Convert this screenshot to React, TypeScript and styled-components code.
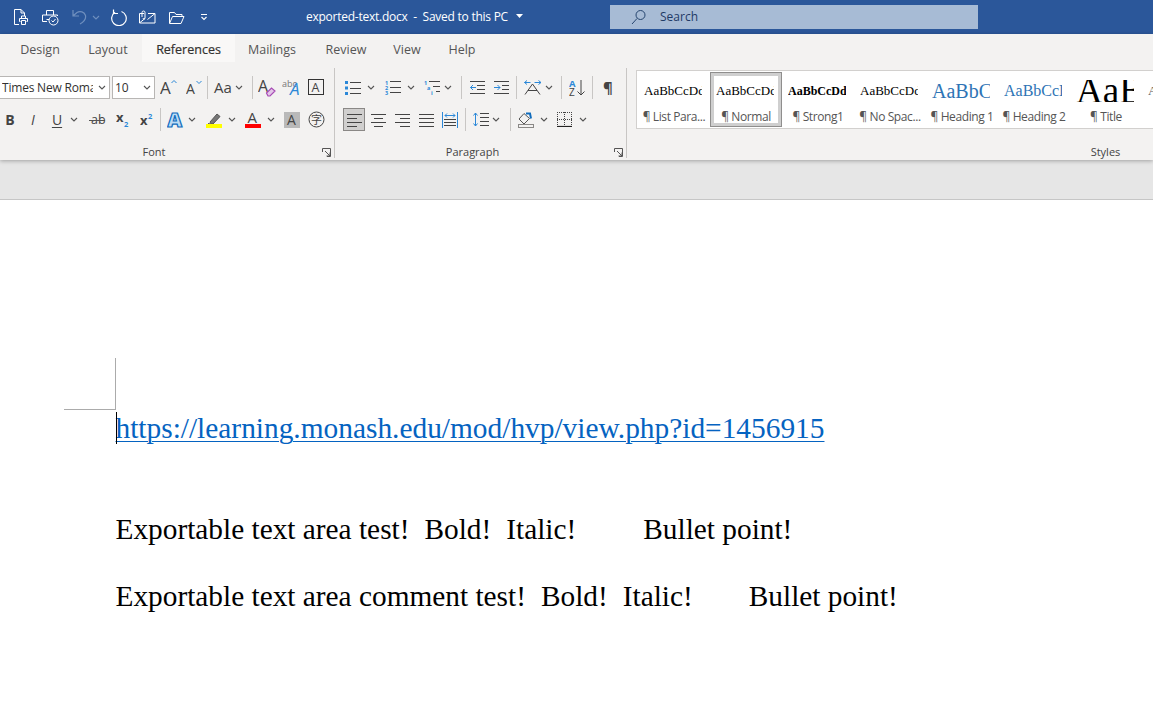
import React from "react";
import styled, { createGlobalStyle } from "styled-components";

const Global = createGlobalStyle`
  html, body { margin: 0; padding: 0; height: 100%; background: #fff; overflow: hidden; }
  #root { height: 100%; }
`;
const UI = `"Open Sans", "Noto Sans", "Liberation Sans", sans-serif`;
const SERIF = `"Liberation Serif", "Times New Roman", serif`;
const DARK = "#444";
const BLUE = "#2b88d8";

const App0 = styled.div`
  width: 1153px; height: 716px; overflow: hidden; display: flex; flex-direction: column; font-family: ${UI};
`;
const TitleBar = styled.header`
  height: 34px; flex: none; background: #2b579a; display: flex; align-items: center; padding-left: 8px; color: #fff;
`;
const Slot = styled.div<{ $w: number; $ml?: number; $gap?: number }>`
  width: ${(p) => p.$w}px; margin-left: ${(p) => p.$ml ?? 0}px; height: 23px; flex: none;
  display: flex; align-items: center; justify-content: center; gap: ${(p) => p.$gap ?? 5}px;
`;
const DocTitle = styled.div`
  width: 391px; flex: none; box-sizing: border-box; padding: 0 0 2px 87px; display: flex; align-items: center; gap: 5px;
  font-size: 12px; white-space: pre; letter-spacing: -0.25px;
`;
const SearchBox = styled.div`
  width: 368px; height: 24px; background: #a7bbd5; display: flex; align-items: center; gap: 14px;
  box-sizing: border-box; padding: 0 0 1px 21px; font-size: 12px; color: #1f3a66;
`;
const Ribbon = styled.section`
  flex: none; height: 126px; background: #f3f2f1; box-shadow: 0 1px 4px rgba(0,0,0,.3); position: relative; z-index: 1;
`;
const Tabs = styled.nav`
  height: 28px; display: flex; padding-left: 6px;
`;
const Tab = styled.div<{ $w: number; $active?: boolean }>`
  width: ${(p) => p.$w}px; display: flex; align-items: center; justify-content: center; padding-top: 2px; box-sizing: border-box;
  font-size: 12.5px; color: ${(p) => (p.$active ? "#323130" : "#555")};
  background: ${(p) => (p.$active ? "#f9f8f7" : "transparent")};
  -webkit-text-stroke: ${(p) => (p.$active ? "0.2px #323130" : "0")};
`;
const Groups = styled.div`
  height: 90px; margin-top: 6px; display: flex;
`;
const Group = styled.div<{ $w: number; $line?: boolean }>`
  width: ${(p) => p.$w}px; flex: none; box-sizing: border-box; display: flex; flex-direction: column;
  border-right: ${(p) => (p.$line ? "1px solid #c8c6c4" : "none")};
`;
const Rows = styled.div<{ $pl?: number }>`
  padding: 8px 0 0 ${(p) => p.$pl ?? 0}px; display: flex; flex-direction: column; gap: 9px;
`;
const Row = styled.div`
  display: flex; height: 23px; align-items: center;
`;
const Sep = styled.div<{ $ml: number; $mr: number }>`
  width: 1px; height: 23px; flex: none; background: #c8c6c4; margin: 0 ${(p) => p.$mr}px 0 ${(p) => p.$ml}px;
`;
const Footer = styled.div<{ $ml: number }>`
  margin-top: auto; margin-bottom: -1px; height: 14px; display: flex; align-items: center; padding-right: 3px;
  & > svg { margin-left: ${(p) => p.$ml}px; flex: none; }
`;
const GroupLabel = styled.div`
  flex: 1; text-align: center; font-size: 11px; color: #444; line-height: 14px; white-space: nowrap;
`;
const Select = styled.div<{ $w: number }>`
  width: ${(p) => p.$w}px; height: 23px; box-sizing: border-box; background: #fff; border: 1px solid #b8b6b4; flex: none;
  display: flex; align-items: center; justify-content: space-between; padding: 0 3px 0 2px;
  font-size: 12px; color: #323130; overflow: hidden; white-space: nowrap;
`;
const SelectText = styled.span`
  overflow: hidden; flex: 1; margin-right: 5px;
`;
const FontSelect = styled(Select)`
  border-left: none; margin-right: 2px; letter-spacing: -0.2px;
`;
const Letter = styled.span<{ $size?: number; $weight?: number; $italic?: boolean; $underline?: boolean }>`
  font-size: ${(p) => p.$size ?? 14}px; font-weight: ${(p) => p.$weight ?? 400};
  font-style: ${(p) => (p.$italic ? "italic" : "normal")}; color: ${DARK}; line-height: 1;
  text-decoration: ${(p) => (p.$underline ? "underline" : "none")}; text-underline-offset: 2px;
`;
const ActiveSlot = styled(Slot)`
  box-sizing: border-box; width: 22px; margin-right: 1px; background: #d0cfce; border: 1px solid #8a8886;
`;
const Gallery = styled.div`
  margin: 2px 0 0 9px; height: 59px; box-sizing: border-box; background: #fff; border: 1px solid #d2d0ce;
  display: flex; padding: 1px;
`;
const StyleItem = styled.div<{ $selected?: boolean }>`
  width: 72px; height: 55px; flex: none; display: flex; flex-direction: column; align-items: center;
  box-shadow: ${(p) => (p.$selected ? "inset 0 0 0 1px #8f8e8d, inset 0 0 0 4px #cfcfcf" : "none")};
`;
const Sample = styled.div<{ $size: number; $color?: string; $bold?: boolean }>`
  width: 58px; height: 22px; margin: 8px 2px 0 0; overflow: hidden; white-space: nowrap;
  font-family: ${SERIF}; font-size: ${(p) => p.$size}px; line-height: 22px; color: ${(p) => p.$color ?? "#000"};
  font-weight: ${(p) => (p.$bold ? 700 : 400)};
`;
const Caption = styled.div`
  margin-top: 7px; font-size: 12px; line-height: 16px; color: #555; white-space: nowrap; letter-spacing: -0.4px;
`;
const Band = styled.div`
  height: 40px; flex: none; box-sizing: border-box; background: #e6e6e6; border-bottom: 1px solid #c6c6c6;
`;
const Page = styled.main`
  flex: 1; background: #fff; padding-top: 158px; display: flex; flex-direction: column; font-family: ${SERIF}; color: #000;
`;
const CropMark = styled.div`
  width: 51px; height: 51px; margin-left: 64px; border-right: 1px solid #ababab; border-bottom: 1px solid #ababab; flex: none;
`;
const Line = styled.div<{ $mt: number }>`
  margin: ${(p) => p.$mt}px 0 0 115.5px; font-size: 29.33px; line-height: 34px; white-space: pre; position: relative;
`;
const Link = styled.span`
  color: #0563c1; font-size: 29.38px; text-decoration: underline; text-decoration-thickness: 1px; text-underline-offset: 3px;
`;
const Caret = styled.i`
  position: absolute; left: 0.5px; top: 1px; width: 1px; height: 32px; background: #000;
`;
const Gap = styled.span<{ $w: number }>`
  display: inline-block; width: ${(p) => p.$w}px;
`;

const Svg: React.FC<{ w?: number; h?: number; children: React.ReactNode }> = ({ w = 16, h = 16, children }) => (
  <svg width={w} height={h} viewBox={`0 0 ${w} ${h}`} fill="none" stroke={DARK} strokeWidth={1}>{children}</svg>
);
const Chev = ({ c = "#555" }: { c?: string }) => (
  <svg width={8} height={5} viewBox="0 0 8 5" fill="none" stroke={c} strokeWidth={1.1}><path d="M1 1l3 3 3-3" /></svg>
);
const Launcher = () => (
  <svg width={9} height={9} viewBox="0 0 9 9" fill="none" stroke="#555"><path d="M.5 4V.5H8.500V8.500H5M3 3l5 5M8 4.500V8H4.500" /></svg>
);
const Txt: React.FC<{ x: number; y: number; s: number; c?: string; w?: number; i?: boolean; f?: string; children: React.ReactNode }> = ({ x, y, s, c = DARK, w = 400, i, f = UI, children }) => (
  <text x={x} y={y} fontSize={s} fill={c} stroke="none" fontWeight={w} fontStyle={i ? "italic" : "normal"} fontFamily={f}>{children}</text>
);

const W = "#fff";
const NewDocIcon = () => (
  <svg width={16} height={17} viewBox="0 0 16 17" fill="none" stroke={W}>
    <path d="M6 15.500H1.500V.5H8l3.500 3.500v3M8 .5V4h3.500" />
    <path d="M7.500 12.500h-1v-3h8v3h-1M8.500 9.500V7h4v2.500M8.500 11.500h4v4h-4z" />
  </svg>
);
const PreviewIcon = () => (
  <svg width={17} height={17} viewBox="0 0 17 17" fill="none" stroke={W}>
    <path d="M4.500 6V1.500h7V6M5 12.500H.5v-6.500h15v1M4.500 10.500H7" />
    <circle cx="11.500" cy="11.500" r="4.500" />
    <path d="M9.500 11.500l1.500 1.500 2.500-3" />
  </svg>
);
const UndoIcon = () => (
  <svg width={15} height={16} viewBox="0 0 15 16" fill="none" stroke="#6f8fbe" strokeWidth={1.2}>
    <path d="M1 1v6h6M1.500 6.500 L5 3.500c3-2 7.500-.5 8.500 3 .6 3-1 6-5.500 8.500" />
  </svg>
);
const RedoIcon = () => (
  <svg width={17} height={17} viewBox="0 0 17 17" fill="none" stroke={W} strokeWidth={1.2}>
    <path d="M5 3.200A7.300 7.300 0 1 0 11.500 2.500" />
    <path d="M4.500 .5v4h4.500" transform="translate(-1 0)" />
  </svg>
);
const MailIcon = () => (
  <svg width={17} height={14} viewBox="0 0 17 14" fill="none" stroke={W}>
    <path d="M5 3.500H.5v9.500h15.500V3.500H9M16 3.500L8.500 9.500 M1 12.500l5-4" />
    <path d="M3 7V2.500a1.500 1.500 0 0 1 3 0V8a1 1 0 0 1-2 0" />
  </svg>
);
const FolderIcon = () => (
  <svg width={17} height={13} viewBox="0 0 17 13" fill="none" stroke={W}>
    <path d="M1.500 12V1.500h5l1.500 2h6v2M1.500 12.500h11.500l3-7H4.500l-3 7" />
  </svg>
);
const CustomizeIcon = () => (
  <svg width={8} height={8} viewBox="0 0 8 8" fill="none" stroke={W} strokeWidth={1.1}>
    <path d="M1 1.500h6M1.500 4l2.500 2.500L6.500 4" />
  </svg>
);
const SearchIcon = () => (
  <svg width={15} height={16} viewBox="0 0 15 16" fill="none" stroke="#26456f" strokeWidth={1}>
    <circle cx="9.500" cy="6" r="4.500" /><path d="M6 9.500L1 15" />
  </svg>
);
const TitleCaret = () => (
  <svg width={7} height={4} viewBox="0 0 7 4" fill={W}><path d="M0 0h7L3.500 4z" /></svg>
);

const GrowIcon = () => (
  <Svg w={18} h={17}><Txt x={0} y={15} s={17}>A</Txt><path d="M11.500 4l2.500-2.500L16.500 4" stroke={BLUE} /></Svg>
);
const ShrinkIcon = () => (
  <Svg w={16} h={17}><Txt x={0} y={15} s={14}>A</Txt><path d="M10.500 2l2.500 2.500L15.500 2" stroke={BLUE} /></Svg>
);
const ClearIcon = () => (
  <Svg w={18} h={18}><Txt x={0} y={13} s={16}>A</Txt>
    <path d="M8.500 14l5-5 3.500 3-5 5h-2z" stroke="#a74bb5" fill="#e3c6e8" strokeWidth={1.2} /></Svg>
);
const AbcIcon = () => (
  <Svg w={18} h={17}><Txt x={0} y={8} s={9} c="#777">abc</Txt><Txt x={8} y={16} s={17} c={BLUE} i>A</Txt></Svg>
);
const BorderAIcon = () => (
  <Svg w={17} h={17}><rect x=".5" y=".5" width="15" height="15" stroke="#333" /><Txt x={3.500} y={12.500} s={12.500}>A</Txt></Svg>
);
const StrikeIcon = () => (
  <Svg w={17} h={14}><Txt x={2} y={11} s={12.500}>ab</Txt><path d="M0 7.500h16" stroke="#555" /></Svg>
);
const SubIcon = () => (
  <Svg w={13} h={15}><Txt x={0} y={10} s={13} w={700}>x</Txt><Txt x={8} y={15} s={7.500} c={BLUE} w={700}>2</Txt></Svg>
);
const SupIcon = () => (
  <Svg w={13} h={15}><Txt x={0} y={13} s={13} w={700}>x</Txt><Txt x={8} y={7} s={7.500} c={BLUE} w={700}>2</Txt></Svg>
);
const TextFxIcon = () => (
  <svg width={17} height={16} viewBox="0 0 17 16">
    <text x={.5} y={15} fontSize={20} fontFamily={UI} fontWeight={800} fill="#bcdcf5" stroke="#0f6cbd" strokeWidth={1.2}>A</text>
  </svg>
);
const HighlightIcon = () => (
  <svg width={16} height={16} viewBox="0 0 16 16" fill="none" stroke="#555">
    <path d="M4 10l7-8 3 2.500-7 7.500H5z" fill="#777" stroke="#555" />
    <path d="M2 11.500L4.500 12" />
    <rect x="0" y="12" width="16" height="4" fill="#ffff00" stroke="none" />
  </svg>
);
const FontColorIcon = () => (
  <svg width={16} height={17} viewBox="0 0 16 17">
    <text x={2.500} y={12} fontSize={15} fontFamily={UI} fill={DARK}>A</text>
    <rect x="0" y="13" width="16" height="4" fill="#ff0000" />
  </svg>
);
const ShadedIcon = () => (
  <svg width={16} height={16} viewBox="0 0 16 16">
    <rect width="16" height="16" fill="#b9b9b9" />
    <text x={3} y={13} fontSize={14} fontFamily={UI} fill={DARK}>A</text>
  </svg>
);
const EnclosedIcon = () => (
  <Svg w={17} h={17}>
    <circle cx="8.500" cy="8.500" r="7.500" />
    <text x={8.500} y={12.500} fontSize={11} textAnchor="middle" fontFamily={`"Noto Sans CJK SC", sans-serif`} fill={DARK} stroke="none">字</text>
  </Svg>
);
const Lines = ({ x, ys, len }: { x: number; ys: number[]; len: number }) => (
  <path d={ys.map((y) => `M${x} ${y}.5h${len}`).join("")} stroke="#444" />
);
const BulletsIcon = () => (
  <Svg w={16} h={14}>
    <rect x="0" y="0" width="3" height="3" fill={BLUE} stroke="none" /><rect x="0" y="5.500" width="3" height="3" fill={BLUE} stroke="none" /><rect x="0" y="11" width="3" height="3" fill={BLUE} stroke="none" />
    <Lines x={5} ys={[1, 7, 12]} len={11} />
  </Svg>
);
const NumberingIcon = () => (
  <Svg w={16} h={15}>
    <Txt x={0} y={5} s={5.500} c={BLUE} w={700}>1</Txt><Txt x={0} y={10} s={5.500} c={BLUE} w={700}>2</Txt><Txt x={0} y={15} s={5.500} c={BLUE} w={700}>3</Txt>
    <Lines x={5} ys={[1, 7, 12]} len={11} />
  </Svg>
);
const MultiIcon = () => (
  <Svg w={16} h={15}>
    <Txt x={0} y={5} s={5.500} c={BLUE} w={700}>1</Txt><Txt x={3} y={10} s={5.500} c={BLUE} w={700}>a</Txt><Txt x={7} y={15} s={5.500} c={BLUE} w={700}>i</Txt>
    <path d="M5 1.500h11M9 6.500h7M12 11.500h4" stroke="#444" />
  </Svg>
);
const OutdentIcon = () => (
  <Svg w={15} h={13}><Lines x={0} ys={[0, 12]} len={15} /><path d="M7 4.500h8M7 8.500h8" stroke="#444" /><path d="M6 6.500H0.500M3 4l-2.500 2.500L3 9" stroke={BLUE} /></Svg>
);
const IndentIcon = () => (
  <Svg w={15} h={13}><Lines x={0} ys={[0, 12]} len={15} /><path d="M8 4.500h7M8 8.500h7" stroke="#444" /><path d="M0 6.500h6M3.500 4L6 6.500 3.500 9" stroke={BLUE} /></Svg>
);
const AsianIcon = () => (
  <Svg w={18} h={15}>
    <path d="M1 14.500L8.500 4l7.500 10.500M4 10.500h9" stroke="#444" />
    <path d="M.5 2.500h6M3 .5L.5 2.500 3 4.500M10.500 2.500h6.500M14.500.5l2.500 2-2.500 2" stroke={BLUE} />
  </Svg>
);
const SortIcon = () => (
  <Svg w={16} h={17}>
    <Txt x={0} y={8} s={9.500} c={BLUE} w={700}>A</Txt><Txt x={0} y={17} s={10}>Z</Txt>
    <path d="M12 1v15M8.500 12.500l3.500 3.500 3.500-3.500" stroke="#444" />
  </Svg>
);
const PilcrowIcon = () => (
  <Letter $size={15} $weight={700}>¶</Letter>
);
const Align = ({ d }: { d: string }) => (
  <Svg w={15} h={14}><path d={d} stroke="#444" /></Svg>
);
const DistIcon = () => (
  <Svg w={16} h={16}>
    <path d="M.5 0v16M15.500 0v16" stroke={BLUE} />
    <path d="M3 3.500h10M5 1.500L3 3.500l2 2M11 1.500l2 2-2 2" stroke={BLUE} />
    <path d="M2 7.500h12M2 10.500h12M2 13.500h12" stroke="#444" />
  </Svg>
);
const SpacingIcon = () => (
  <Svg w={16} h={15}>
    <path d="M2.500 1v13M.5 3.500l2-2.500 2 2.500M.5 11.500l2 2.500 2-2.500" stroke={BLUE} />
    <Lines x={7} ys={[1, 5, 9, 13]} len={9} />
  </Svg>
);
const BucketIcon = () => (
  <Svg w={16} h={16}>
    <path d="M6 1.500L1 7l5 5 5.500-5.500z" stroke="#555" />
    <path d="M8 1.500l4 0 1 5" stroke="#0f6cbd" strokeWidth={2} />
    <rect x=".5" y="12.500" width="15" height="3" fill="#f3f2f1" stroke="#8a8886" />
  </Svg>
);
const BordersIcon = () => (
  <Svg w={15} h={15}>
    <path d="M.5 0v14M14.500 0v14M0 .5h15M7.500 0v14M0 7.500h15" stroke="#444" strokeDasharray="1 1" />
    <path d="M0 14.500h15" stroke="#222" strokeWidth={1.200} />
  </Svg>
);

const STYLES = [
  { s: "¶ List Para...", z: 13, t: "AaBbCcDdEe" },
  { s: "¶ Normal", z: 13, t: "AaBbCcDdEe", sel: true },
  { s: "¶ Strong1", z: 12, t: "AaBbCcDd", b: true },
  { s: "¶ No Spac...", z: 13, t: "AaBbCcDdEe" },
  { s: "¶ Heading 1", z: 20, t: "AaBbCcDd", c: "#2e74b5" },
  { s: "¶ Heading 2", z: 16, t: "AaBbCcDd", c: "#2e74b5" },
  { s: "¶ Title", z: 37, t: "AaBbCc" },
  { s: "¶ Subtitle", z: 13, t: "AaBbCcDdEe", c: "#5a5a5a" },
];
const TABS: [string, number][] = [["Design", 68], ["Layout", 68], ["References", 93], ["Mailings", 74], ["Review", 74], ["View", 48], ["Help", 62]];

export default function App() {
  return (
    <App0>
      <Global />
      <TitleBar>
        <Slot $w={26}><NewDocIcon /></Slot>
        <Slot $w={26} $ml={3}><PreviewIcon /></Slot>
        <Slot $w={39} $ml={3}><UndoIcon /><Chev c="#6f8fbe" /></Slot>
        <Slot $w={26}><RedoIcon /></Slot>
        <Slot $w={32}><MailIcon /></Slot>
        <Slot $w={26}><FolderIcon /></Slot>
        <Slot $w={30}><CustomizeIcon /></Slot>
        <DocTitle>exported-text.docx  -  Saved to this PC <TitleCaret /></DocTitle>
        <SearchBox><SearchIcon />Search</SearchBox>
      </TitleBar>
      <Ribbon>
        <Tabs>
          {TABS.map(([t, w]) => <Tab key={t} $w={w} $active={t === "References"}>{t}</Tab>)}
        </Tabs>
        <Groups>
          <Group $w={335} $line>
            <Rows>
              <Row>
                <FontSelect $w={110}><SelectText>Times New Roman</SelectText><Chev /></FontSelect>
                <Select $w={43}><SelectText>10</SelectText><Chev /></Select>
                <Slot $w={24} $ml={2}><GrowIcon /></Slot>
                <Slot $w={24} $ml={1}><ShrinkIcon /></Slot>
                <Sep $ml={1} $mr={1} />
                <Slot $w={39} $gap={3}><Letter $size={15}>Aa</Letter><Chev /></Slot>
                <Sep $ml={4} $mr={2} />
                <Slot $w={24}><ClearIcon /></Slot>
                <Slot $w={24}><AbcIcon /></Slot>
                <Slot $w={24} $ml={1}><BorderAIcon /></Slot>
              </Row>
              <Row>
                <Slot $w={20}><Letter $weight={700} $size={14}>B</Letter></Slot>
                <Slot $w={26}><Letter $italic $size={14}>I</Letter></Slot>
                <Slot $w={38} $gap={8}><Letter $underline $size={14}>U</Letter><Chev /></Slot>
                <Slot $w={26}><StrikeIcon /></Slot>
                <Slot $w={24}><SubIcon /></Slot>
                <Slot $w={24}><SupIcon /></Slot>
                <Sep $ml={2} $mr={3} />
                <Slot $w={34} $gap={4}><TextFxIcon /><Chev /></Slot>
                <Slot $w={45} $gap={6}><HighlightIcon /><Chev /></Slot>
                <Slot $w={33} $gap={6}><FontColorIcon /><Chev /></Slot>
                <Slot $w={24} $ml={4}><ShadedIcon /></Slot>
                <Slot $w={24}><EnclosedIcon /></Slot>
              </Row>
            </Rows>
            <Footer $ml={14}><GroupLabel>Font</GroupLabel><Launcher /></Footer>
          </Group>
          <Group $w={292} $line>
            <Rows $pl={8}>
              <Row>
                <Slot $w={34} $gap={6}><BulletsIcon /><Chev /></Slot>
                <Slot $w={35} $ml={5} $gap={6}><NumberingIcon /><Chev /></Slot>
                <Slot $w={41} $gap={4}><MultiIcon /><Chev /></Slot>
                <Sep $ml={3} $mr={3} />
                <Slot $w={24}><OutdentIcon /></Slot>
                <Slot $w={24}><IndentIcon /></Slot>
                <Sep $ml={3} $mr={3} />
                <Slot $w={36} $gap={3}><AsianIcon /><Chev /></Slot>
                <Sep $ml={5} $mr={3} />
                <Slot $w={24}><SortIcon /></Slot>
                <Sep $ml={3} $mr={3} />
                <Slot $w={24}><PilcrowIcon /></Slot>
              </Row>
              <Row>
                <ActiveSlot $w={22}><Align d="M0 1.500h15M0 5.500h10M0 9.500h15M0 13.500h10" /></ActiveSlot>
                <Slot $w={24}><Align d="M0 1.500h15M3 5.500h9M0 9.500h15M3 13.500h9" /></Slot>
                <Slot $w={24}><Align d="M0 1.500h15M5 5.500h10M0 9.500h15M5 13.500h10" /></Slot>
                <Slot $w={24}><Align d="M0 1.500h15M0 5.500h15M0 9.500h15M0 13.500h15" /></Slot>
                <Slot $w={24}><DistIcon /></Slot>
                <Sep $ml={3} $mr={3} />
                <Slot $w={35} $gap={3}><SpacingIcon /><Chev /></Slot>
                <Sep $ml={6} $mr={3} />
                <Slot $w={37} $gap={6}><BucketIcon /><Chev /></Slot>
                <Slot $w={42} $gap={7}><BordersIcon /><Chev /></Slot>
              </Row>
            </Rows>
            <Footer $ml={4}><GroupLabel>Paragraph</GroupLabel><Launcher /></Footer>
          </Group>
          <Group $w={960}>
            <Gallery>
              {STYLES.map((st) => (
                <StyleItem key={st.s} $selected={st.sel}>
                  <Sample $size={st.z} $color={st.c} $bold={st.b}>{st.t}</Sample>
                  <Caption>{st.s}</Caption>
                </StyleItem>
              ))}
            </Gallery>
            <Footer $ml={0}><GroupLabel>Styles</GroupLabel></Footer>
          </Group>
        </Groups>
      </Ribbon>
      <Band />
      <Page>
        <CropMark />
        <Line $mt={1}><Caret /><Link>https://learning.monash.edu/mod/hvp/view.php?id=1456915</Link></Line>
        <Line $mt={67}>Exportable text area test!<Gap $w={15} />Bold!<Gap $w={15} />Italic!<Gap $w={67} />Bullet point!</Line>
        <Line $mt={33}>Exportable text area comment test!<Gap $w={15} />Bold!<Gap $w={15} />Italic!<Gap $w={56} />Bullet point!</Line>
      </Page>
    </App0>
  );
}
